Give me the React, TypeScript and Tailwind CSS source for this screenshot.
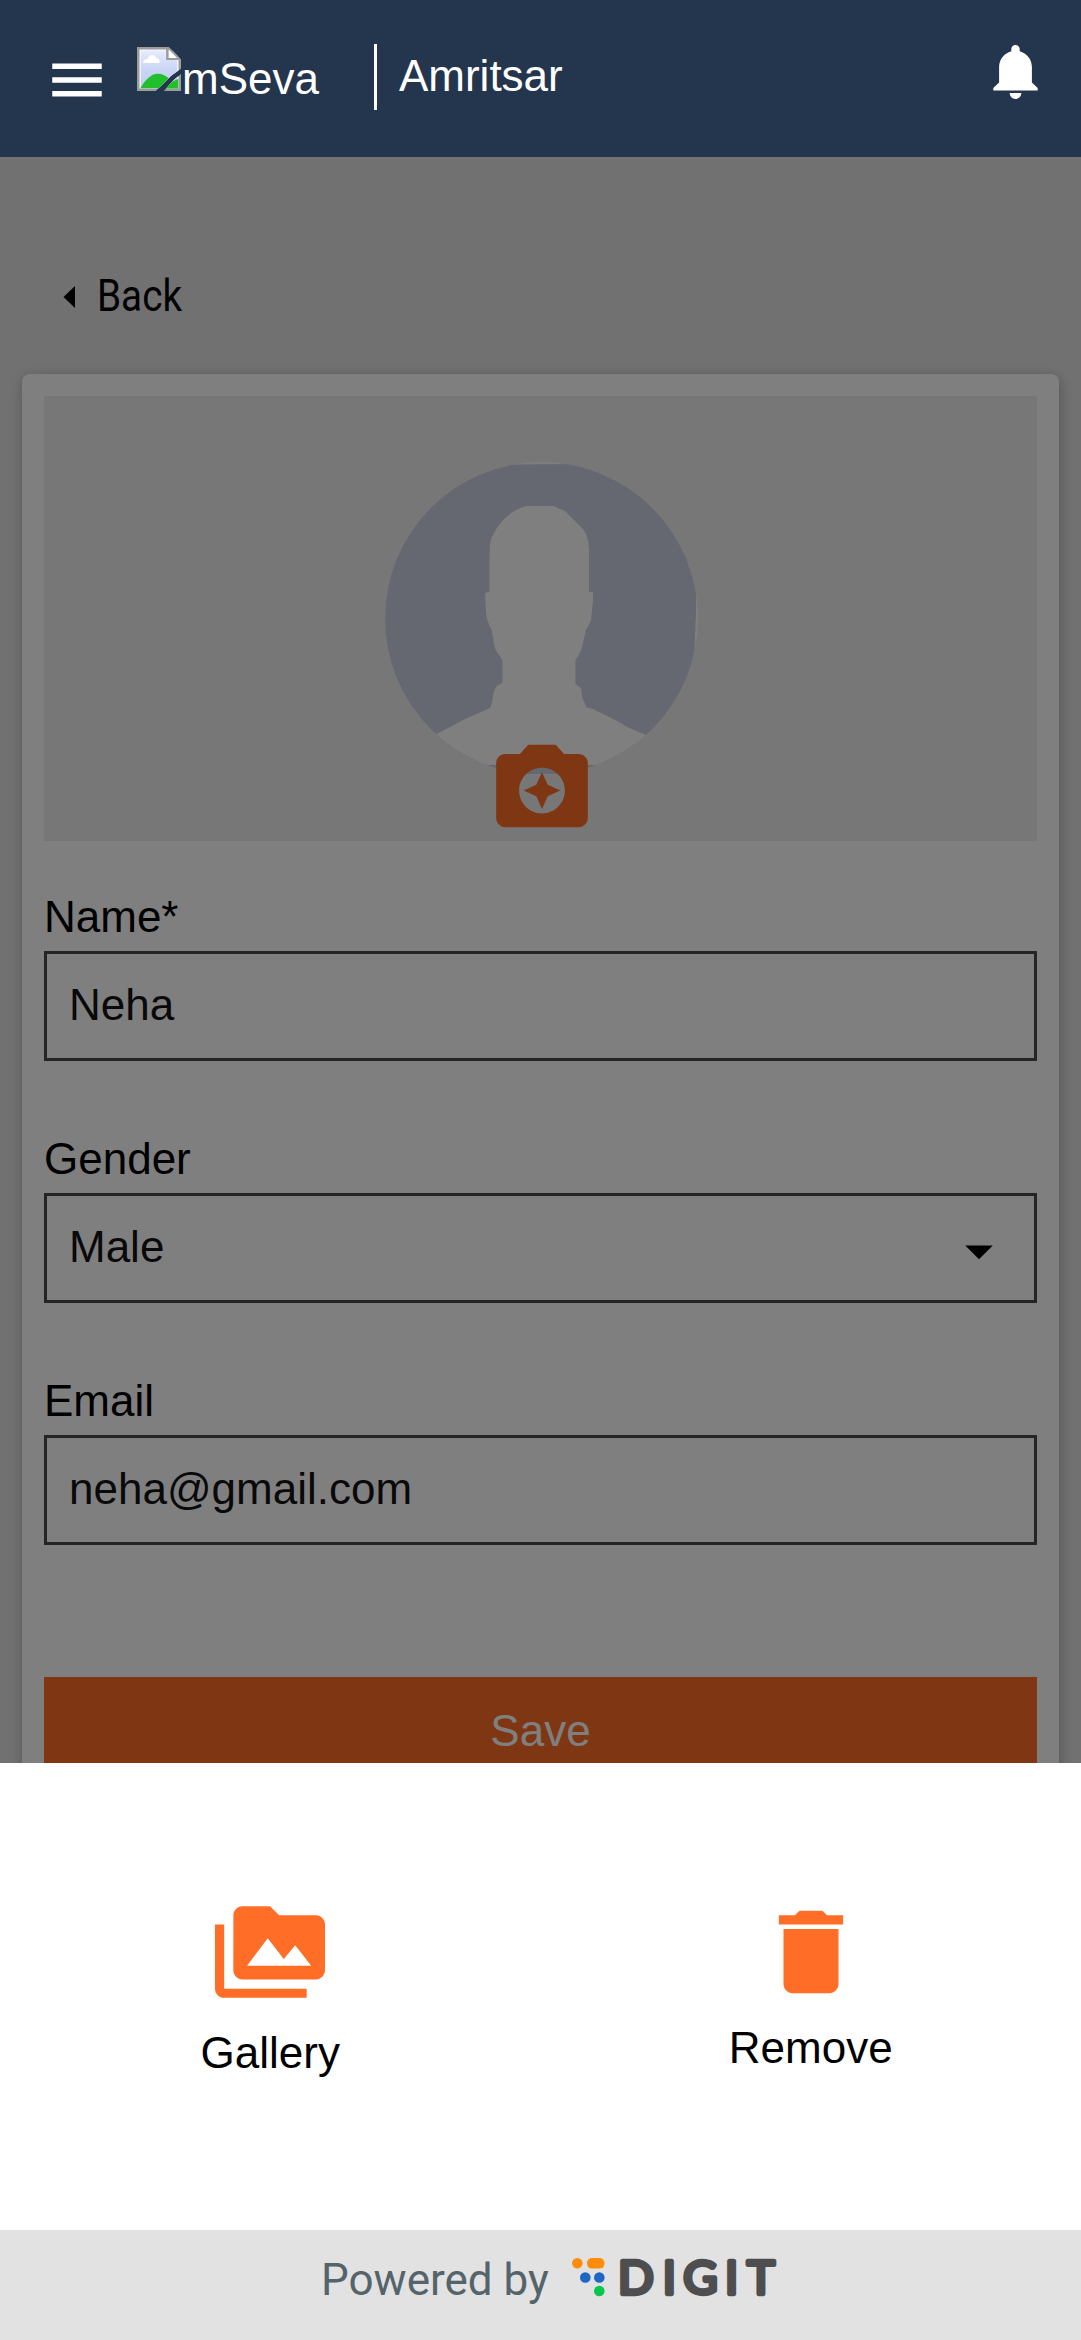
import React from "react";

function MenuIcon() {
  return (
    <svg viewBox="0 0 24 24" className="h-[66px] w-[66px] fill-white">
      <path d="M3 18h18v-2H3v2zm0-5h18v-2H3v2zm0-7v2h18V6H3z" />
    </svg>
  );
}

function BrokenImageIcon() {
  return (
    <svg viewBox="0 0 16 16" className="h-11 w-11 shrink-0 overflow-visible">
      <defs>
        <linearGradient id="sky" x1="0" y1="0" x2="0" y2="1">
          <stop offset="0" stopColor="#e6ebfc" />
          <stop offset="0.5" stopColor="#cbd5f5" />
          <stop offset="1" stopColor="#bfccf2" />
        </linearGradient>
        <clipPath id="torn">
          <path d="M0 0H11.500L16 4.500V7.900L12.500 10.400 6.800 16H0ZM16 9.800V16H9.800L13.200 12.200Z" />
        </clipPath>
      </defs>
      <g clipPath="url(#torn)">
        <rect width="16" height="16" fill="#9c9c9c" />
        <path d="M.9 .9H15.100V15.100H.9Z" fill="#f4f6ff" />
        <path d="M1.400 1.400H14.600V14.600H1.400Z" fill="url(#sky)" />
        <path d="M2.200 5.800C2.200 4.700 3.100 4.300 3.900 4.400 4.200 2.500 6.500 2.500 7 4.100 8.200 4.200 8.300 5.100 8.200 5.800Z" fill="#fff" />
        <path d="M1.200 15C3 12 5 9.700 7.600 9.700 10.500 9.700 13 12.500 15 14.900Z" fill="#1fc02c" />
        <path d="M12.400 12.800 15 11.500V15.100H10.500Z" fill="#1fc02c" />
        <path d="M10.600 0V4.700H16V3.500L12 0Z" fill="#9c9c9c" />
        <path d="M11.500 .9V4H14.600Z" fill="#fff" />
      </g>
    </svg>
  );
}

function BellIcon() {
  return (
    <svg viewBox="0 0 45 54" className="h-[54px] w-[45px] fill-white">
      <path d="M22.5 0C25 0 26.7 1.9 26.7 4.3V6.2C33.6 8 38.9 14.2 38.9 22V37.5L44.7 43V45.6H.3V43L6.1 37.5V22C6.1 14.2 11.4 8 18.3 6.2V4.3C18.3 1.9 20 0 22.5 0Z" />
      <path d="M16.7 48H28.3C28.3 51.2 25.7 54 22.5 54S16.7 51.2 16.7 48Z" />
    </svg>
  );
}

function Avatar() {
  return (
    <svg viewBox="0 0 313 313" className="h-[313px] w-[313px]">
      <defs>
        <clipPath id="round">
          <circle cx="156.5" cy="156.5" r="156.5" />
        </clipPath>
      </defs>
      <g clipPath="url(#round)">
        <rect width="313" height="313" fill="#fff" />
        <path d="M0 4L125 2.5 190 2H311V150L309 200V312H0Z" fill="#cbd0e0" />
        <path
          d="M142 44H166Q171 44 174 47Q178 47 181 50L196 65C202 71 204 79 204 89V130H208V138L206 158Q204 164 201 168L197 185C196 190 193 194 190.500 198V222C194 225 196.500 225 196.500 229C196.500 236 199 238 201 245L208 247 236 261 242 265 262 273.500 290 286V303H0V286L50 273 78 258 105 246C108 240 107 233 111 225 113 222 117.500 223 117.500 219V198C114 192 110 189 109 182L107 169C105 164 101.500 159 101 150L100 132Q100 130 104.500 130V99C105 86 104 79 108 73 114 60 127 47 142 44Z"
          fill="#fff"
        />
      </g>
    </svg>
  );
}

function CameraIcon() {
  return (
    <svg viewBox="0 0 24 24" className="h-[110px] w-[110px] fill-[#ff6d26]">
      <path d="M9 3L7.17 5H4c-1.1 0-2 .9-2 2v12c0 1.1.9 2 2 2h16c1.1 0 2-.9 2-2V7c0-1.1-.9-2-2-2h-3.17L15 3H9zm3 15c-2.76 0-5-2.24-5-5s2.24-5 5-5 5 2.24 5 5-2.24 5-5 5z" />
      <path d="M12 17l1.25-2.75L16 13l-2.75-1.25L12 9l-1.25 2.75L8 13l2.75 1.25z" />
    </svg>
  );
}

function Field({ label, value, select }: { label: string; value: string; select?: boolean }) {
  return (
    <div className="mb-[76px]">
      <div className="leading-[44px]">{label}</div>
      <div className="mt-3 flex h-[110px] items-center justify-between border-[3px] border-[#4a4a4a] pl-[22px] pr-[22px]">
        <span className="-mt-[3px] leading-[44px] text-[#121212]">{value}</span>
        {select && (
          <svg viewBox="0 0 24 24" className="mt-[5px] h-[66px] w-[66px]">
            <path d="M7 10l5 5 5-5z" />
          </svg>
        )}
      </div>
    </div>
  );
}

function DigitLogo() {
  return (
    <svg viewBox="0 0 208 42" className="h-[42px] w-[208px] overflow-visible">
      <circle cx="7.300" cy="7.300" r="5.300" fill="#ff8c0a" />
      <rect x="17" y="2" width="17.500" height="10.600" rx="5" fill="#ff8c0a" />
      <circle cx="15.300" cy="21.500" r="5.300" fill="#1d68c4" />
      <circle cx="29.300" cy="21.500" r="5.300" fill="#1d68c4" />
      <circle cx="29.300" cy="35" r="5.300" fill="#05c74b" />
      <text
        x="48 92.700 113.200 155 176.900"
        y="37.700"
        fontFamily="Lato, sans-serif"
        fontWeight="400"
        fontSize="47"
        fill="#4e4e50"
        stroke="#4e4e50"
        strokeWidth="4.400"
        strokeLinejoin="round"
      >
        DIGIT
      </text>
    </svg>
  );
}

export default function App() {
  return (
    <div className="flex h-[2340px] w-[1081px] flex-col overflow-hidden bg-white font-['Liberation_Sans',Arial,sans-serif] text-[44px] text-black">
      <header className="flex h-[157px] shrink-0 items-start bg-[#24364e] pl-11 pr-[43.5px] text-white">
        <div className="mt-[47px]">
          <MenuIcon />
        </div>
        <div className="ml-[27px] mt-[47px] flex">
          <BrokenImageIcon />
          <span className="ml-px mt-[10px] leading-[44px]">mSeva</span>
        </div>
        <div className="ml-[55px] mt-[44px] h-[66px] w-[3px] bg-white" />
        <span className="ml-[22px] mt-[54px] leading-[44px]">Amritsar</span>
        <div className="ml-auto mt-[45px]">
          <BellIcon />
        </div>
      </header>

      <main className="relative h-[1606px] shrink-0 overflow-hidden bg-[#e3e3e3]">
        <div className="flex h-[217px] items-start pl-[63px]">
          <svg viewBox="0 0 12 22" className="mt-[129px] h-[22px] w-3">
            <path d="M12 0V22L.5 11Z" />
          </svg>
          <span className="ml-[22px] mt-[115px] origin-left scale-x-[0.88] font-[Roboto,sans-serif] leading-[48px]">
            Back
          </span>
        </div>

        <section className="mx-[22px] h-[1500px] rounded-lg bg-white px-[22px] pt-[22px] shadow-[1px_3px_16px_rgba(0,0,0,0.14),1px_3px_11px_rgba(0,0,0,0.12)]">
          <div className="relative flex h-[445px] justify-center bg-[#eeeeee] pl-[2px] pt-[66px]">
            <Avatar />
            <div className="absolute left-[443px] top-[335px]">
              <CameraIcon />
            </div>
          </div>
          <div className="mt-[54px]">
            <Field label="Name*" value="Neha" />
            <Field label="Gender" value="Male" select />
            <Field label="Email" value="neha@gmail.com" />
          </div>
          <div className="mt-[132px] flex h-[132px] justify-center bg-[#ff6d26] pt-[32px] text-white">
            <span className="leading-[44px]">Save</span>
          </div>
        </section>
        <div className="absolute inset-0 bg-black/50" />
      </main>

      <section className="flex h-[467px] shrink-0 items-start justify-around bg-white pt-[134px]">
        <div className="flex w-1/2 flex-col items-center">
          <svg viewBox="0 0 24 24" className="h-[110px] w-[110px] fill-[#ff6d26]">
            <path d="M2 6H0v5h.01L0 20c0 1.1.9 2 2 2h18v-2H2V6zm20-2h-8l-2-2H6c-1.100 0-1.990.9-1.990 2L4 16c0 1.100.9 2 2 2h16c1.100 0 2-.9 2-2V6c0-1.100-.9-2-2-2zM7 15l4.500-6 3.500 4.510 2.500-3.010L21 15H7z" />
          </svg>
          <span className="mt-6 leading-[44px]">Gallery</span>
        </div>
        <div className="flex w-1/2 flex-col items-center">
          <svg viewBox="0 0 24 24" className="h-[110px] w-[110px] fill-[#ff6d26]">
            <path d="M6 19c0 1.100.9 2 2 2h8c1.100 0 2-.9 2-2V7H6v12zM19 4h-3.500l-1-1h-5l-1 1H5v2h14V4z" />
          </svg>
          <span className="mt-[19px] leading-[44px]">Remove</span>
        </div>
      </section>

      <footer className="flex h-[110px] shrink-0 items-start bg-[#e2e2e2] pl-[321px]">
        <span className="mt-[26px] w-[249px] whitespace-nowrap font-[Roboto,sans-serif] text-[44px] leading-[48px] text-[#55646a]">
          Powered by
        </span>
        <div className="mt-[26px]">
          <DigitLogo />
        </div>
      </footer>
    </div>
  );
}
